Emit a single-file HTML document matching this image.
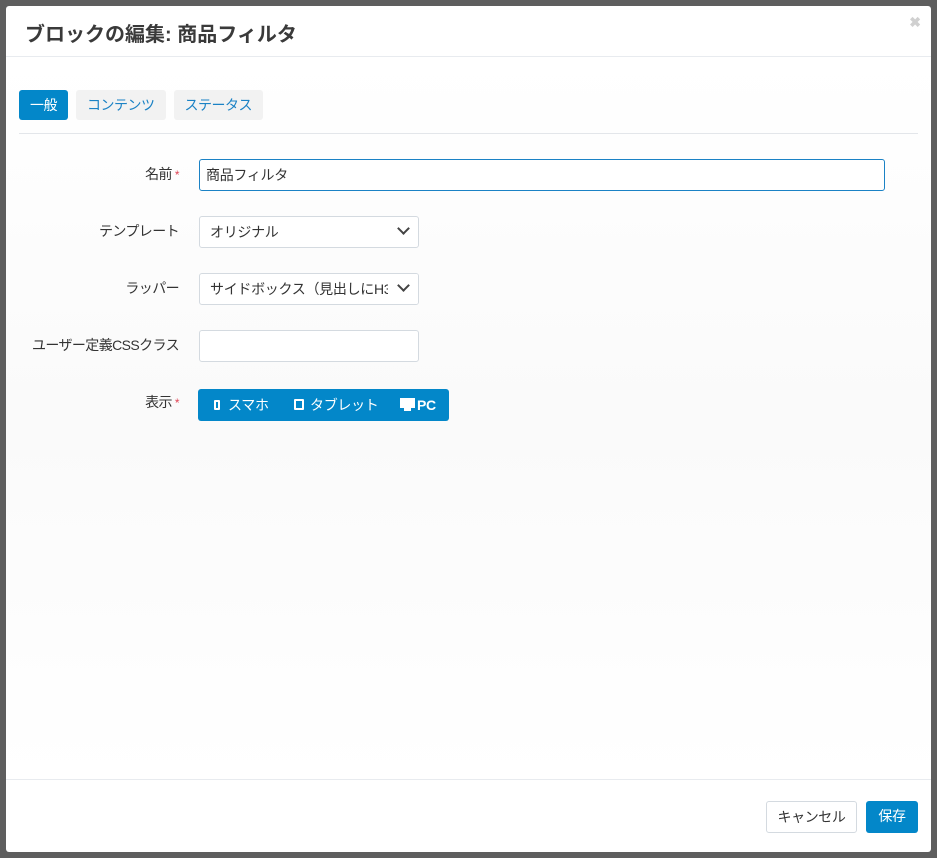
<!DOCTYPE html>
<html><head><meta charset="utf-8"><style>
*{box-sizing:border-box;margin:0;padding:0}
body{width:937px;height:858px;background:#5e5e5e;font-family:"Liberation Sans","Noto Sans CJK JP",sans-serif;position:relative;overflow:hidden;color:#333}
.modal{position:absolute;left:6px;top:6px;width:925px;height:846px;background:#fff;border-radius:3px}
.hdr{height:51px;border-bottom:1px solid #e8ebef;position:relative}
.hdr h1{position:absolute;left:19px;top:12px;font-size:20px;font-weight:bold;color:#3a3a3a}
.x{position:absolute;right:10px;top:8px;color:#d0d0d0;font-size:14px;font-weight:bold}
.body{position:absolute;top:52px;left:0;right:0;bottom:73px;background:linear-gradient(#fff,#fafafa 50%,#fff)}
.tabs{position:absolute;left:13px;top:32px;display:flex;gap:8px}
.tab{height:30px;padding:0 11px;border-radius:3px;background:#f2f2f2;color:#1b82c5;font-size:14px;line-height:30px;letter-spacing:-0.5px}
.tab.a{background:#0387c9;color:#fff}
.line{position:absolute;left:13px;right:13px;top:75px;border-top:1px solid #e3e6ea}
.lbl{position:absolute;right:752px;font-size:14px;color:#333;text-align:right;white-space:nowrap;letter-spacing:-0.6px}
.lbl b{color:#e04455;font-weight:normal;font-size:12px;margin-left:3px}
.in{position:absolute;left:193px;height:32px;border:1px solid #d4dae0;border-radius:3px;background:#fff;font-size:14px;line-height:30px;padding-left:10px;color:#333;letter-spacing:-0.3px}
.chev{position:absolute;right:10px;top:7px;width:9px;height:9px;border-right:2px solid #444;border-bottom:2px solid #444;transform:rotate(45deg)}
.foot{position:absolute;left:0;right:0;bottom:0;height:73px;border-top:1px solid #e8ebef}
.btn{position:absolute;top:21px;height:32px;border-radius:3px;font-size:14px;line-height:30px;text-align:center;letter-spacing:-0.4px}
</style></head><body>
<div class="modal">
<div class="hdr"><h1>ブロックの編集: 商品フィルタ</h1><span class="x">✖</span></div>
<div class="body">
<div class="tabs"><div class="tab a">一般</div><div class="tab">コンテンツ</div><div class="tab">ステータス</div></div>
<div class="line"></div>
<div class="lbl" style="top:106px">名前<b>*</b></div>
<div class="in" style="top:101px;width:686px;border-color:#1b82c5;padding-left:6px">商品フィルタ</div>
<div class="lbl" style="top:163px">テンプレート</div>
<div class="in" style="top:158px;width:220px">オリジナル<span class="chev"></span></div>
<div class="lbl" style="top:220px">ラッパー</div>
<div class="in" style="top:215px;width:220px;overflow:hidden;white-space:nowrap">サイドボックス（見出しにH3<span style="position:absolute;right:0;top:0;width:30px;height:30px;background:#fff"></span><span class="chev"></span></div>
<div class="lbl" style="top:277px">ユーザー定義CSSクラス</div>
<div class="in" style="top:272px;width:220px"></div>
<div class="lbl" style="top:334px">表示<b>*</b></div>
<div style="position:absolute;left:192px;top:331px;width:251px;height:32px;background:#0387c9;border-radius:3px;color:#fff;font-size:14px;line-height:32px;letter-spacing:-0.3px">
<span style="position:absolute;left:16px;top:11px;width:6px;height:10px;border:2px solid #fff;border-radius:1px"></span><span style="position:absolute;left:30px">スマホ</span>
<span style="position:absolute;left:96px;top:10px;width:10px;height:11px;border:2px solid #fff;border-radius:1px"></span><span style="position:absolute;left:112px">タブレット</span>
<span style="position:absolute;left:202px;top:9px;width:15px;height:10px;border:2px solid #fff;background:#fff"></span><span style="position:absolute;left:206px;top:19px;width:7px;height:3px;background:#fff"></span><span style="position:absolute;left:219px;font-weight:bold">PC</span>
</div>
</div>
<div class="foot">
<div class="btn" style="left:760px;width:91px;border:1px solid #d4dae0;color:#333">キャンセル</div>
<div class="btn" style="left:860px;width:52px;background:#0387c9;color:#fff">保存</div>
</div>
</div>
</body></html>
